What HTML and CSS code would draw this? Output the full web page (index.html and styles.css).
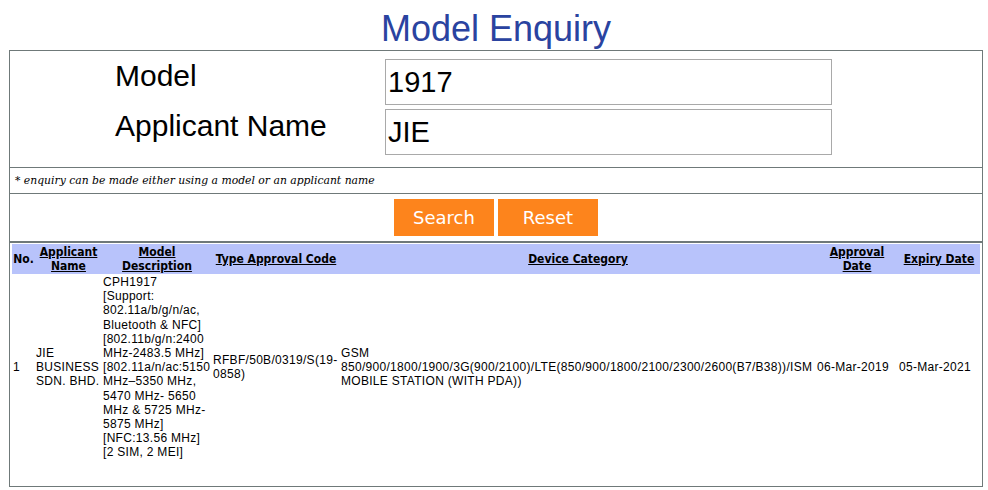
FILE: index.html
```html
<!DOCTYPE html>
<html>
<head>
<meta charset="utf-8">
<title>Model Enquiry</title>
<link rel="stylesheet" href="styles.css">
</head>
<body>
<div class="page">
  <h1 class="title">Model Enquiry</h1>
  <div class="box">
    <div class="form-section">
      <label class="label" for="model">Model</label>
      <input class="field" id="model" type="text" value="1917">
      <label class="label" for="applicant">Applicant Name</label>
      <input class="field" id="applicant" type="text" value="JIE">
    </div>
    <div class="note">* enquiry can be made either using a model or an applicant name</div>
    <div class="actions">
      <button class="btn" type="button">Search</button>
      <button class="btn" type="button">Reset</button>
    </div>
    <table class="results">
      <colgroup>
        <col class="c-no">
        <col class="c-app">
        <col class="c-model">
        <col class="c-type">
        <col class="c-dev">
        <col class="c-appr">
        <col class="c-exp">
      </colgroup>
      <thead>
        <tr>
          <th>No.</th>
          <th><a href="#">Applicant<br>Name</a></th>
          <th><a href="#">Model<br>Description</a></th>
          <th><a href="#">Type Approval Code</a></th>
          <th><a href="#">Device Category</a></th>
          <th><a href="#">Approval<br>Date</a></th>
          <th><a href="#">Expiry Date</a></th>
        </tr>
      </thead>
      <tbody>
        <tr>
          <td>1</td>
          <td>JIE<br>BUSINESS<br>SDN. BHD.</td>
          <td>CPH1917<br>[Support:<br>802.11a/b/g/n/ac,<br>Bluetooth &amp; NFC]<br>[802.11b/g/n:2400<br>MHz-2483.5 MHz]<br>[802.11a/n/ac:5150<br>MHz–5350 MHz,<br>5470 MHz- 5650<br>MHz &amp; 5725 MHz-<br>5875 MHz]<br>[NFC:13.56 MHz]<br>[2 SIM, 2 MEI]</td>
          <td>RFBF/50B/0319/S(19-<br>0858)</td>
          <td>GSM<br>850/900/1800/1900/3G(900/2100)/LTE(850/900/1800/2100/2300/2600(B7/B38))/ISM<br>MOBILE STATION (WITH PDA))</td>
          <td>06-Mar-2019</td>
          <td>05-Mar-2021</td>
        </tr>
      </tbody>
    </table>
  </div>
</div>
</body>
</html>
```
FILE: styles.css
```css
html, body {
  margin: 0;
  padding: 0;
  background: #ffffff;
}

body {
  padding-top: 8px;
  font-family: "Liberation Sans", Arial, sans-serif;
}

.page {
  width: 974px;
  margin-left: 9px;
}

.title {
  margin: 0;
  font-family: "Liberation Sans", Arial, sans-serif;
  font-weight: normal;
  font-size: 36px;
  line-height: 42px;
  color: #2a43a0;
  text-align: center;
}

.box {
  border: 1px solid #6f7979;
  padding-bottom: 25px;
}

.form-section {
  display: grid;
  grid-template-columns: 270px 447px;
  grid-template-rows: 46px 46px;
  row-gap: 4px;
  padding: 8px 0 12px 105px;
  border-bottom: 1px solid #6f7979;
}

.label {
  font-size: 30px;
  line-height: 34px;
  color: #000;
  align-self: start;
}

.field {
  box-sizing: border-box;
  width: 447px;
  height: 46px;
  margin: 0;
  padding: 0 2px;
  border: 1px solid #a9a9a9;
  font-family: "Liberation Sans", Arial, sans-serif;
  font-size: 29px;
  color: #000;
  background: #fff;
  outline: none;
}

.note {
  height: 26px;
  box-sizing: border-box;
  padding: 6px 0 0 5px;
  font-family: "DejaVu Serif", serif;
  font-style: italic;
  font-size: 10.8px;
  line-height: 14px;
  color: #000;
  border-bottom: 1px solid #6f7979;
}

.actions {
  display: flex;
  justify-content: center;
  gap: 4px;
  padding: 5px 0;
  border-bottom: 2px solid #6f7979;
}

.btn {
  width: 100px;
  height: 37px;
  margin: 0;
  padding: 0;
  border: none;
  background: #fd841c;
  color: #ffffff;
  font-family: "DejaVu Sans", Verdana, sans-serif;
  font-size: 18px;
  cursor: pointer;
}

.results {
  width: 968px;
  margin: 1px 2px 0 2px;
  border-collapse: collapse;
  border-spacing: 0;
  table-layout: fixed;
}

.c-no { width: 23px; }
.c-app { width: 67px; }
.c-model { width: 110px; }
.c-type { width: 128px; }
.c-dev { width: 476px; }
.c-appr { width: 82px; }
.c-exp { width: 82px; }

.results th {
  background: #b8c3fb;
  padding: 1px;
  font-family: "DejaVu Sans Condensed", "DejaVu Sans", sans-serif;
  font-stretch: condensed;
  font-weight: bold;
  font-size: 12px;
  line-height: 14px;
  color: #000;
  text-align: center;
  vertical-align: middle;
  white-space: nowrap;
}

.results th a {
  color: #000;
  text-decoration: underline;
}

.results td {
  padding: 1px;
  font-family: "Liberation Sans", Arial, sans-serif;
  font-size: 12px;
  letter-spacing: 0.3px;
  line-height: 14.2px;
  color: #000;
  text-align: left;
  vertical-align: middle;
  white-space: nowrap;
}
```
